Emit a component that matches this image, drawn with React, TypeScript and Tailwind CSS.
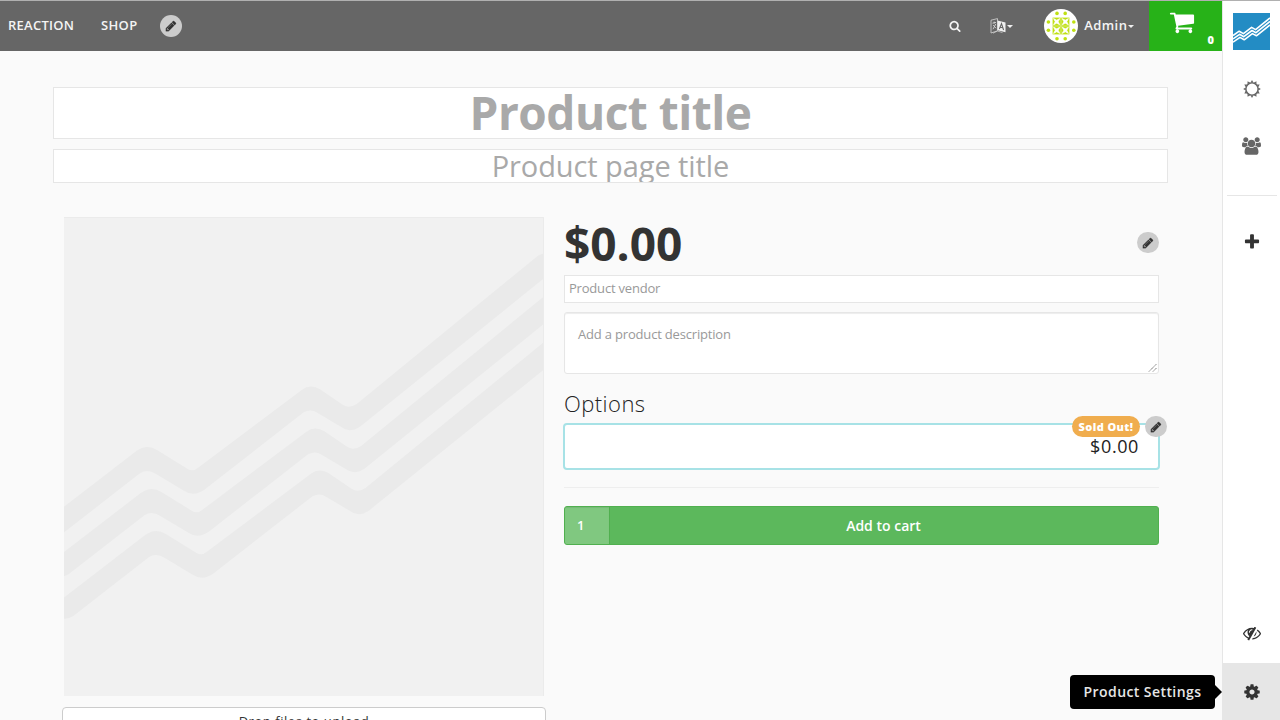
import type { ReactNode } from "react";

const paths = {
  pencil:
    "M491 1536l91-91-235-235-91 91v107h128v128h107zm523-928q0-22-22-22-10 0-17 7l-542 542q-7 7-7 17 0 22 22 22 10 0 17-7l542-542q7-7 7-17zm-54-192l416 416-832 832h-416v-416zm683 96q0 53-37 90l-166 166-416-416 166-165q36-38 90-38 53 0 91 38l235 234q37 39 37 91z",
  search:
    "M1216 832q0-185-131.5-316.5t-316.5-131.5-316.5 131.5-131.5 316.5 131.5 316.5 316.5 131.5 316.5-131.5 131.5-316.5zm512 832q0 52-38 90t-90 38q-54 0-90-38l-343-342q-179 124-399 124-143 0-273.5-55.5t-225-150-150-225-55.5-273.5 55.5-273.5 150-225 225-150 273.5-55.5 273.5 55.5 225 150 150 225 55.5 273.5q0 220-124 399l343 343q37 37 37 90z",
  cart: "M704 1536q0 52-38 90t-90 38-90-38-38-90 38-90 90-38 90 38 38 90zm896 0q0 52-38 90t-90 38-90-38-38-90 38-90 90-38 90 38 38 90zm128-1088v512q0 24-16.5 42.5t-40.5 21.5l-1044 122q13 60 13 70 0 16-24 64h920q26 0 45 19t19 45-19 45-45 19h-1024q-26 0-45-19t-19-45q0-11 8-31.5t16-36 21.5-40 15.5-29.5l-177-823h-204q-26 0-45-19t-19-45 19-45 45-19h256q16 0 28.5 6.5t19.5 15.5 13 24.5 8 26 5.5 29.5 4.5 26h1201q26 0 45 19t19 45z",
  plus: "M1600 736v192q0 40-28 68t-68 28h-416v416q0 40-28 68t-68 28h-192q-40 0-68-28t-28-68v-416h-416q-40 0-68-28t-28-68v-192q0-40 28-68t68-28h416v-416q0-40 28-68t68-28h192q40 0 68 28t28 68v416h416q40 0 68 28t28 68z",
  cog: "M1152 896q0-106-75-181t-181-75-181 75-75 181 75 181 181 75 181-75 75-181zm512-109v222q0 12-8 23t-20 13l-185 28q-19 54-39 91 35 50 107 138 10 12 10 25t-9 23q-27 37-99 108t-94 71q-12 0-26-9l-138-108q-44 23-91 38-16 136-29 186-7 28-36 28h-222q-14 0-24.5-8.5t-11.5-21.5l-28-184q-49-16-90-37l-141 107q-10 9-25 9-14 0-25-11-126-114-165-168-7-10-7-23 0-12 8-23 15-21 51-66.5t54-70.5q-27-50-41-99l-183-27q-13-2-21-12.5t-8-23.5v-222q0-12 8-23t19-13l186-28q14-46 39-92-40-57-107-138-10-12-10-24 0-10 9-23 26-36 98.5-107.5t94.5-71.5q13 0 26 10l138 107q44-23 91-38 16-136 29-186 7-28 36-28h222q14 0 24.5 8.5t11.5 21.5l28 184q49 16 90 37l142-107q9-9 24-9 13 0 25 10 129 119 165 170 7 8 7 22 0 12-8 23-15 21-51 66.5t-54 70.5q26 50 41 98l183 28q13 2 21 12.5t8 23.5z",
  group:
    "M657 896q-162 5-265 128h-134q-82 0-138-40.5t-56-118.5q0-353 124-353 6 0 43.5 21t97.5 42.5 119 21.5q67 0 133-23-5 37-5 66 0 139 81 256zm1071 637q0 120-73 189.5t-194 69.5h-874q-121 0-194-69.5t-73-189.5q0-53 3.5-103.5t14-109 26.5-108.5 43-97.5 62-81 85.5-53.5 111.5-20q10 0 43 21.5t73 48 107 48 135 21.5 135-21.5 107-48 73-48 43-21.5q61 0 111.5 20t85.5 53.5 62 81 43 97.5 26.5 108.5 14 109 3.5 103.5zm-1024-1277q0 106-75 181t-181 75-181-75-75-181 75-181 181-75 181 75 75 181zm704 384q0 159-112.5 271.5t-271.5 112.5-271.5-112.5-112.5-271.5 112.5-271.5 271.5-112.5 271.5 112.5 112.5 271.5zm576 225q0 78-56 118.5t-138 40.5h-134q-103-123-265-128 81-117 81-256 0-29-5-66 66 23 133 23 59 0 119-21.5t97.5-42.5 43.5-21q124 0 124 353zm-128-609q0 106-75 181t-181 75-181-75-75-181 75-181 181-75 181 75 75 181z",
  eyeSlash:
    "M555 1335l78-141q-87-63-136-159t-49-203q0-121 61-225-229 117-381 353 167 258 427 375zm389-759q0-20-14-34t-34-14q-125 0-214.5 89.5t-89.5 214.5q0 20 14 34t34 14 34-14 14-34q0-86 61-147t147-61q20 0 34-14t14-34zm363-191q0 7-1 9-106 189-316 567t-315 566l-49 89q-10 16-28 16-12 0-134-70-16-10-16-28 0-12 44-87-143-65-263.5-173t-208.5-245q-20-31-20-69t20-69q153-235 380-371t496-136q89 0 180 17l54-97q10-16 28-16 5 0 18 6t31 15.5 33 18.5 31.5 18.5 19.5 11.5q16 10 16 27zm37 447q0 139-79 253.5t-209 164.5l280-502q8 45 8 84zm448 128q0 35-20 69-39 64-109 145-150 172-347.5 267t-419.5 95l74-132q212-18 392.5-137t301.5-307q-115-179-282-294l63-112q95 64 182.5 153t144.5 184q20 34 20 69z",
};

function Glyph({ name, className, box = "0 0 1792 1792" }: { name: keyof typeof paths; className: string; box?: string }) {
  return (
    <svg viewBox={box} fill="currentColor" className={className}>
      <path d={paths[name]} />
    </svg>
  );
}

function EditButton({ className = "" }: { className?: string }) {
  return (
    <button className={`flex w-[22px] shrink-0 items-center justify-center rounded-full bg-[#cccccc] pr-px text-[#333333] ${className}`}>
      <Glyph name="pencil" className="size-[12px] stroke-current stroke-[30]" />
    </button>
  );
}

function Caret() {
  return (
    <svg viewBox="0 0 6 3" className="h-[3px] w-[6px] fill-[#efefef]">
      <path d="M0 0h6L3 3z" />
    </svg>
  );
}

function LanguageIcon() {
  return (
    <svg viewBox="0 0 16 16" className="size-4">
      <path d="M1 2.2 7.5 0.6v12.2L1 15z" fill="none" stroke="#c9c9c9" strokeWidth="0.9" />
      <path d="M2.5 5.2 6 4.4M4.2 3.6v2M3 11.2 5.8 6M3.2 7l2.8 3.2" stroke="#d5d5d5" strokeWidth="0.9" fill="none" />
      <path d="M7.5 2.6 15.5 4.4v9.8l-8-1.9z" fill="#efefef" />
      <path d="M9.4 11 11.5 5.6 13.6 12M10.2 9.2l2.6.6" stroke="#666" strokeWidth="1.1" fill="none" />
      <path d="M3 15.2 7.5 13l5 1.6" stroke="#c9c9c9" strokeWidth="0.8" fill="none" />
    </svg>
  );
}

function Avatar() {
  const dots = [
    [13, 4.4], [21.2, 4.4], [13, 29.8], [21.2, 29.8],
    [4.4, 13], [4.4, 21.2], [29.8, 13], [29.8, 21.2],
  ];
  const tiles = [[8.6, 8.6], [17.2, 8.6], [8.6, 17.2], [17.2, 17.2]];
  return (
    <svg viewBox="0 0 34 34" className="size-[34px]">
      <circle cx="17" cy="17" r="17" fill="#fff" />
      {dots.map(([x, y], i) => (
        <circle key={i} cx={x} cy={y} r="1.8" fill="#bfe012" />
      ))}
      {tiles.map(([x, y], i) => (
        <g key={i}>
          <rect x={x} y={y} width="8.2" height="8.2" fill="#bfe012" />
          <path
            transform={`translate(${x} ${y})`}
            d="M1 1 4.1 2.6 7.2 1 5.6 4.1 7.2 7.2 4.1 5.6 1 7.2 2.6 4.1z"
            fill="#fff"
            stroke="#fff"
            strokeWidth="0.7"
          />
        </g>
      ))}
    </svg>
  );
}

function BrandMark() {
  return (
    <svg viewBox="0 0 37 37" className="size-[37px]">
      <rect width="37" height="37" fill="#238cc4" />
      <g fill="none" stroke="#fff" strokeWidth="1.6" strokeLinejoin="round">
        <path d="M0 22.6 6.2 18.2 10.4 20.6 18.6 14.4 22.6 16.6 37 4.9" />
        <path d="M0 25.9 6.6 21.3 10.8 23.7 19 17.5 23 19.7 37 8.4" />
        <path d="M0 29.2 7 24.4 11.2 26.8 19.4 20.6 23.4 22.8 37 11.9" />
      </g>
    </svg>
  );
}

function SunIcon() {
  const rays = Array.from({ length: 12 }, (_, i) => i * 30);
  return (
    <svg viewBox="-9 -9 18 18" className="size-[18px] text-[#666666]">
      <circle r="6.1" fill="none" stroke="currentColor" strokeWidth="1.4" />
      {rays.map((a) => (
        <path key={a} d="M-1.6-6.2 0-8.9 1.6-6.2z" transform={`rotate(${a})`} fill="currentColor" />
      ))}
    </svg>
  );
}

const stripe =
  "M-10 297.4 72.7 233.7Q83 226.5 93 233L123.3 251.7Q129 255.5 134.7 250.3L237.7 173Q246.5 166.5 256 172.3L278.7 187.7Q285.5 192 292.7 187L472.7 39.7Q476 37.3 484 35V58.1L296 209.7Q285.5 216.5 277.7 210.3L253.3 195.7Q247 191.5 240 195L140 273Q129.5 280 120 273.7L92 257Q83.5 251.5 76 256.3L0.5 315Q-5 318.5-10 317.5z";

function PlaceholderImage() {
  return (
    <svg viewBox="0 0 480 479" className="h-[479px] w-[480px]">
      <rect width="480" height="479" fill="#f1f1f1" />
      <g fill="#eaeaea">
        <path d={stripe} />
        <path d={stripe} transform="translate(4.4 42)" />
        <path d={stripe} transform="translate(8.8 84)" />
      </g>
      <path d="M0 .5H479.5V479" fill="none" stroke="#ebebeb" />
    </svg>
  );
}

function RailItem({ children, className }: { children: ReactNode; className: string }) {
  return <button className={`flex w-full items-center justify-center ${className}`}>{children}</button>;
}

function Header() {
  return (
    <header className="flex h-[50px] shrink-0 items-center bg-[#666666] text-[13px] font-semibold text-[#f4f4f4]">
      <nav className="flex flex-1 items-center pl-2">
        <a className="w-[93px] tracking-[0.25px]">REACTION</a>
        <a className="w-[59px] tracking-[0.35px]">SHOP</a>
        <EditButton className="h-[22px]" />
      </nav>
      <Glyph name="search" className="mr-[29px] size-[12px]" />
      <div className="mr-[31px] flex items-center">
        <LanguageIcon />
        <span className="ml-px"><Caret /></span>
      </div>
      <div className="mr-[15px] flex items-center">
        <Avatar />
        <span className="ml-[6px] mr-[0.6px] tracking-[0.45px]">Admin</span>
        <Caret />
      </div>
      <div className="relative flex h-full w-[73px] justify-center bg-[#27b218] pr-[7px] pt-[8px] text-white">
        <Glyph name="cart" className="size-[26px]" />
        <span className="absolute right-[8px] top-[31px] text-[11px] font-extrabold leading-4">0</span>
      </div>
    </header>
  );
}

export default function App() {
  return (
    <div className="flex h-[720px] w-[1280px] flex-col overflow-hidden border-t border-[#b0b0b0] bg-[#fafafa] font-['Open_Sans',sans-serif] text-[#333333]">
      <div className="flex min-h-0 flex-1">
        <div className="flex w-[1222px] shrink-0 flex-col overflow-hidden">
          <Header />
          <main className="flex flex-col pl-[53px] pr-[54px] pt-[36px]">
            <h1 className="h-[52px] shrink-0 overflow-hidden border border-[#e6e6e6] bg-white text-center text-[46px] font-bold leading-[49px] tracking-[-0.5px] text-[#a9a9a9]">
              Product title
            </h1>
            <h2 className="mt-[10px] h-[34px] shrink-0 overflow-hidden border border-[#e6e6e6] bg-white text-center text-[29px] leading-[31px] tracking-[-0.08px] text-[#a9a9a9]">
              Product page title
            </h2>
            <div className="mt-[34px] flex">
              <div className="flex w-[502px] shrink-0 flex-col pl-[9px] pr-[9px]">
                <div className="pl-[2px]">
                  <PlaceholderImage />
                </div>
                <button className="mt-[11px] flex h-[34px] justify-center rounded-[4px] border border-[#cccccc] bg-white pt-[3px] text-[13px] leading-[20px] tracking-[0.55px]">
                  Drop files to upload
                </button>
              </div>
              <section className="ml-[9px] flex w-[595px] flex-col">
                <div className="flex h-[58px] items-start justify-between">
                  <div className="text-[46px] font-bold leading-[53px]">$0.00</div>
                  <EditButton className="mt-[15px] h-[21px]" />
                </div>
                <div className="h-[28px] border border-[#e6e6e6] bg-white px-[4px] text-[13px] leading-[25px] tracking-[-0.2px] text-[#999999]">
                  Product vendor
                </div>
                <div className="mt-[9px] flex h-[62px] justify-between rounded-[3px] border border-[#e6e6e6] bg-white pl-[13px] text-[13px] leading-[20px] tracking-[-0.18px] text-[#999999] shadow-[inset_0_1px_1px_rgba(0,0,0,0.075)]">
                  <span className="pt-[11px]">Add a product description</span>
                  <svg viewBox="0 0 9 9" className="mb-px mr-px size-[9px] self-end">
                    <path d="M1 8.5 8.5 1M5 8.5 8.5 5" stroke="#555" strokeWidth="0.9" strokeDasharray="1.2 .6" fill="none" />
                  </svg>
                </div>
                <h3 className="mt-[14px] h-[31px] text-[22px] font-light leading-[30px] tracking-[0.45px] text-[#222222]">Options</h3>
                <div className="relative -ml-px -mr-px mt-[4px] flex h-[47px] items-center justify-end rounded-[4px] border-2 border-[#a7e2e6] bg-white pr-[19px] text-[18px] tracking-[0.6px] text-[#222222]">
                  $0.00
                  <span className="absolute right-[18px] top-[-9px] h-[21px] w-[68px] rounded-full bg-[#f0ad4e] text-center text-[11px] font-extrabold leading-[21px] tracking-[0.4px] text-white">
                    Sold Out!
                  </span>
                  <EditButton className="absolute right-[-9px] top-[-9px] h-[21px]" />
                </div>
                <hr className="mt-[17px] border-[#eeeeee]" />
                <div className="mt-[18px] flex h-[39px] overflow-hidden rounded-[3px] border border-[#50b04f] bg-[#5cb85c] text-white">
                  <div className="flex w-[45px] items-center border-r border-[#50b04f] bg-[#80c880] pl-3 text-[13px] font-semibold shadow-[inset_0_1px_1px_rgba(0,0,0,0.075)]">
                    1
                  </div>
                  <button className="flex-1 pr-px text-[14px] font-semibold">Add to cart</button>
                </div>
              </section>
            </div>
          </main>
        </div>
        <aside className="relative flex w-[58px] shrink-0 flex-col border-l border-[#e6e6e6] bg-white">
          <RailItem className="h-[60px]">
            <BrandMark />
          </RailItem>
          <RailItem className="h-[55px]">
            <SunIcon />
          </RailItem>
          <RailItem className="h-[60px]">
            <Glyph name="group" box="64 0 1920 1792" className="h-[18px] w-[19px] text-[#666666]" />
          </RailItem>
          <hr className="ml-[4px] mr-[3px] mt-[19px] border-[#e6e6e6]" />
          <RailItem className="mt-[16px] h-[60px]">
            <Glyph name="plus" className="size-[18px]" />
          </RailItem>
          <RailItem className="mt-auto h-[60px] pb-px">
            <Glyph name="eyeSlash" className="size-[18px]" />
          </RailItem>
          <RailItem className="h-[57px] bg-[#e6e6e6]">
            <Glyph name="cog" className="size-[18px]" />
          </RailItem>
          <div className="absolute bottom-[11px] right-[58px] flex items-center">
            <div className="flex h-[34px] w-[145px] items-center justify-center whitespace-nowrap rounded-[4px] bg-black pb-[2px] text-[14px] font-semibold tracking-[0.42px] text-[#e6e6e6]">
              Product Settings
            </div>
            <svg viewBox="0 0 7 14" className="h-[14px] w-[7px]">
              <path d="M0 0 7 7 0 14z" />
            </svg>
          </div>
        </aside>
      </div>
    </div>
  );
}
